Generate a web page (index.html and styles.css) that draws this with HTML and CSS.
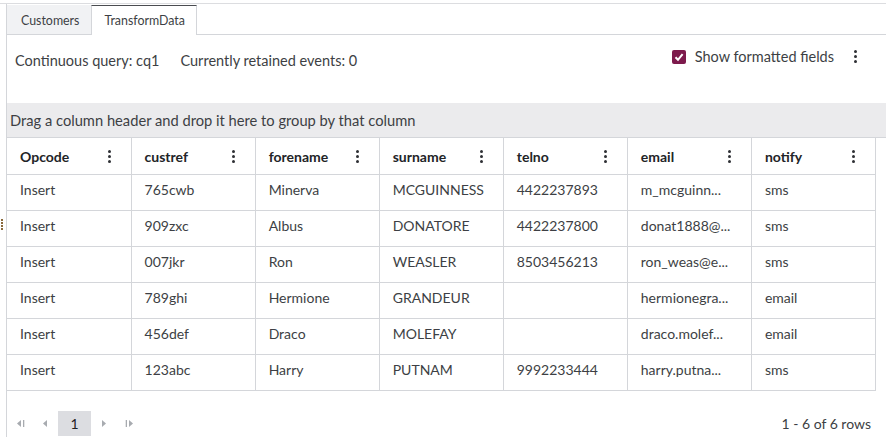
FILE: index.html
```html
<!DOCTYPE html>
<html>
<head>
<meta charset="utf-8">
<link rel="stylesheet" href="styles.css">
</head>
<body>
<div class="page">
  <div class="app">
    <div class="tabs">
      <div class="tab">Customers</div>
      <div class="tab active">TransformData</div>
      <div class="tab-fill"></div>
    </div>
    <div class="toolbar">
      <span class="info">Continuous query: cq1</span>
      <span class="info second">Currently retained events: 0</span>
      <span class="spacer"></span>
      <label class="check">
        <span class="box"><svg width="14" height="14" viewBox="0 0 14 14"><path d="M3.5 7.2 L6 9.8 L10.6 4.2" fill="none" stroke="#fff" stroke-width="2"/></svg></span>
        <span>Show formatted fields</span>
      </label>
      <span class="kebab big"><i></i><i></i><i></i></span>
    </div>
    <div class="groupbar">Drag a column header and drop it here to group by that column</div>
    <div class="grid">
      <span class="handle"><i></i><i></i><i></i><i></i></span>
      <table>
        <thead>
          <tr>
            <th><div class="hc">Opcode<span class="kebab"><i></i><i></i><i></i></span></div></th>
            <th><div class="hc">custref<span class="kebab"><i></i><i></i><i></i></span></div></th>
            <th><div class="hc">forename<span class="kebab"><i></i><i></i><i></i></span></div></th>
            <th><div class="hc">surname<span class="kebab"><i></i><i></i><i></i></span></div></th>
            <th><div class="hc">telno<span class="kebab"><i></i><i></i><i></i></span></div></th>
            <th><div class="hc">email<span class="kebab"><i></i><i></i><i></i></span></div></th>
            <th><div class="hc">notify<span class="kebab"><i></i><i></i><i></i></span></div></th>
          </tr>
        </thead>
        <tbody>
          <tr><td>Insert</td><td>765cwb</td><td>Minerva</td><td>MCGUINNESS</td><td>4422237893</td><td>m_mcguinn...</td><td>sms</td></tr>
          <tr><td>Insert</td><td>909zxc</td><td>Albus</td><td>DONATORE</td><td>4422237800</td><td>donat1888@...</td><td>sms</td></tr>
          <tr><td>Insert</td><td>007jkr</td><td>Ron</td><td>WEASLER</td><td>8503456213</td><td>ron_weas@e...</td><td>sms</td></tr>
          <tr><td>Insert</td><td>789ghi</td><td>Hermione</td><td>GRANDEUR</td><td></td><td>hermionegra...</td><td>email</td></tr>
          <tr><td>Insert</td><td>456def</td><td>Draco</td><td>MOLEFAY</td><td></td><td>draco.molef...</td><td>email</td></tr>
          <tr><td>Insert</td><td>123abc</td><td>Harry</td><td>PUTNAM</td><td>9992233444</td><td>harry.putna...</td><td>sms</td></tr>
        </tbody>
      </table>
    </div>
    <div class="pager">
      <div class="nav">
        <span class="pbtn"><svg width="8" height="7" viewBox="0 0 8 7"><path d="M4 0 L0 3.5 L4 7Z" fill="#a8abb0"/><rect x="6" y="0" width="1.3" height="7" fill="#a8abb0"/></svg></span>
        <span class="pbtn"><svg width="5" height="7" viewBox="0 0 5 7"><path d="M4 0 L0 3.5 L4 7Z" fill="#a8abb0"/></svg></span>
        <span class="page-num">1</span>
        <span class="pbtn"><svg width="5" height="7" viewBox="0 0 5 7"><path d="M1 0 L5 3.5 L1 7Z" fill="#a8abb0"/></svg></span>
        <span class="pbtn"><svg width="8" height="7" viewBox="0 0 8 7"><rect x="0.7" y="0" width="1.3" height="7" fill="#a8abb0"/><path d="M4 0 L8 3.5 L4 7Z" fill="#a8abb0"/></svg></span>
      </div>
      <div class="count">1 - 6 of 6 rows</div>
    </div>
  </div>
</div>
</body>
</html>
```

FILE: styles.css
```css
html, body {
  margin: 0;
  padding: 0;
  background: #fff;
}
body {
  font-family: Lato, "Open Sans", sans-serif;
  font-size: 14px;
  color: #3d3f44;
  overflow: hidden;
}
.page {
  margin-top: 3px;
  border-top: 1px solid #dcdde0;
  height: 433px;
}
.app {
  margin-left: 6px;
  border-left: 1px solid #d4d6da;
  height: 100%;
  display: flex;
  flex-direction: column;
}
.tabs {
  display: flex;
  padding-top: 1px;
  height: 31px;
  box-sizing: border-box;
}
.tab {
  height: 30px;
  line-height: 27px;
  padding: 2px 12px 0 14px;
  font-size: 12.4px;
  background: #f1f2f4;
  border-bottom: 1px solid #d4d6da;
  box-sizing: border-box;
  color: #3d3f44;
}
.tab.active {
  background: #fff;
  border-top: 1px solid #4a4c50;
  border-left: 1px solid #d4d6da;
  border-right: 1px solid #d4d6da;
  border-bottom: none;
  line-height: 27px;
  padding: 1px 11px 0 12px;
}
.tab-fill {
  flex: 1;
  border-bottom: 1px solid #d4d6da;
}
.toolbar {
  height: 68px;
  display: flex;
  align-items: flex-start;
  padding: 16px 0 0 8px;
  box-sizing: border-box;
  line-height: 20px;
  font-size: 14.5px;
}
.info.second {
  margin-left: 21px;
}
.spacer {
  flex: 1;
}
.check {
  display: flex;
  align-items: center;
  gap: 9px;
  margin-top: -4px;
}
.box {
  width: 14px;
  height: 14px;
  background: #7d1a4c;
  border-radius: 2px;
  display: block;
}
.box svg { display: block; }
.kebab {
  display: inline-flex;
  flex-direction: column;
  gap: 2px;
  width: 3px;
}
.kebab i {
  display: block;
  width: 3px;
  height: 3px;
  border-radius: 50%;
  background: #2e3034;
}
.kebab.big {
  margin: -1px 29px 0 20px;
}
.groupbar {
  height: 35px;
  line-height: 35px;
  background: #ebebed;
  padding-left: 3px;
  box-sizing: border-box;
  border-bottom: 1px solid #d4d6da;
  color: #3d3f44;
  font-size: 14.7px;
}
.grid {
  position: relative;
}
.handle {
  position: absolute;
  left: -6px;
  top: 81px;
  display: flex;
  flex-direction: column;
  gap: 1px;
}
.handle i {
  display: block;
  width: 2px;
  height: 2px;
  background: #8a6a3c;
}
table {
  border-collapse: collapse;
  table-layout: fixed;
  width: 869px;
}
th, td {
  width: 124px;
  box-sizing: border-box;
  text-align: left;
  border-right: 1px solid #d4d6da;
  border-bottom: 1px solid #d4d6da;
  padding: 0 0 0 13px;
  white-space: nowrap;
  overflow: hidden;
}
th {
  height: 36px;
  font-weight: 700;
  color: #222427;
  padding-top: 2px;
}
.hc {
  display: flex;
  align-items: center;
  justify-content: space-between;
  padding-right: 20px;
}
td {
  height: 36px;
  padding-top: 0;
  padding-bottom: 5px;
  line-height: 20px;
  vertical-align: middle;
}
.pager {
  flex: 1;
  display: flex;
  align-items: flex-start;
  justify-content: space-between;
  padding: 20px 15px 0 1px;
}
.nav {
  display: flex;
  align-items: center;
}
.pbtn {
  width: 25px;
  height: 25px;
  display: flex;
  align-items: center;
  justify-content: center;
}
.page-num {
  width: 33px;
  height: 25px;
  line-height: 25px;
  text-align: center;
  background: #dcdde1;
  color: #1f2124;
}
.count {
  line-height: 25px;
  color: #3d3f44;
}
```
